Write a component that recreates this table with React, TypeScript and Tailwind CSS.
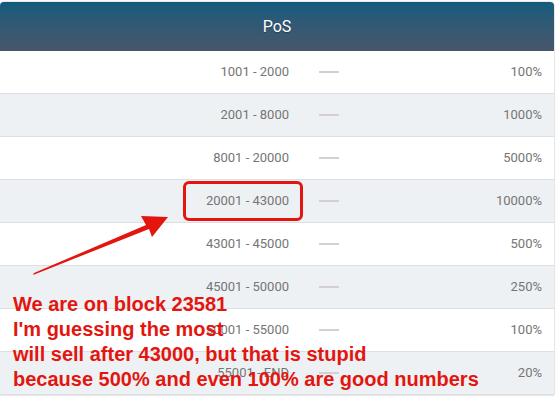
import React from "react";

const rows = [
  { range: "1001 - 2000", pct: "100%" },
  { range: "2001 - 8000", pct: "1000%" },
  { range: "8001 - 20000", pct: "5000%" },
  { range: "20001 - 43000", pct: "10000%" },
  { range: "43001 - 45000", pct: "500%" },
  { range: "45001 - 50000", pct: "250%" },
  { range: "50001 - 55000", pct: "100%" },
  { range: "55001 - END", pct: "20%" },
];

function PosTable() {
  return (
    <div className="mt-[2px] w-[554px] rounded-t-[4px] shadow-[0_0_2px_rgba(0,0,0,0.35)]">
      <div className="flex h-[49px] items-center justify-center rounded-t-[4px] bg-gradient-to-b from-[#0e5b7d] to-[#47566a] text-[16px] text-white [text-shadow:0_1px_1px_rgba(0,0,0,0.3)]">
        PoS
      </div>
      {rows.map((r, i) => (
        <div
          key={r.range}
          className={`flex h-[43px] items-center border-b border-[#dcdfe3] text-[13px] text-[#757575] ${
            i % 2 ? "bg-[#eef1f4]" : "bg-white"
          }`}
        >
          <div className="w-[289px] text-right">{r.range}</div>
          <div className="ml-[30px] h-[2px] w-[20px] bg-[#d4cfd2]" />
          <div className="flex-1 pr-[12px] text-right">{r.pct}</div>
        </div>
      ))}
    </div>
  );
}

export default function App() {
  return (
    <div className="relative h-[397px] w-[556px] overflow-hidden bg-white font-['Roboto',sans-serif]">
      <PosTable />

      {/* markup on top of the table */}
      <div className="absolute left-[183px] top-[181px] h-[40px] w-[120px] rounded-[6px] border-[3px] border-[#e3160f]" />
      <svg className="pointer-events-none absolute left-0 top-0" width="556" height="397">
        <polygon
          points="33,275 34,273 146,225 141,216 168,217 152,237 149,229"
          fill="#e3160f"
        />
      </svg>
      <div className="absolute left-[13px] top-[292px] font-['Liberation_Sans',Arial,sans-serif] text-[20px] font-bold leading-[25px] text-[#e3160f]">
        <div>We are on block 23581</div>
        <div>I'm guessing the most</div>
        <div>will sell after 43000, but that is stupid</div>
        <div>because 500% and even 100% are good numbers</div>
      </div>
    </div>
  );
}
